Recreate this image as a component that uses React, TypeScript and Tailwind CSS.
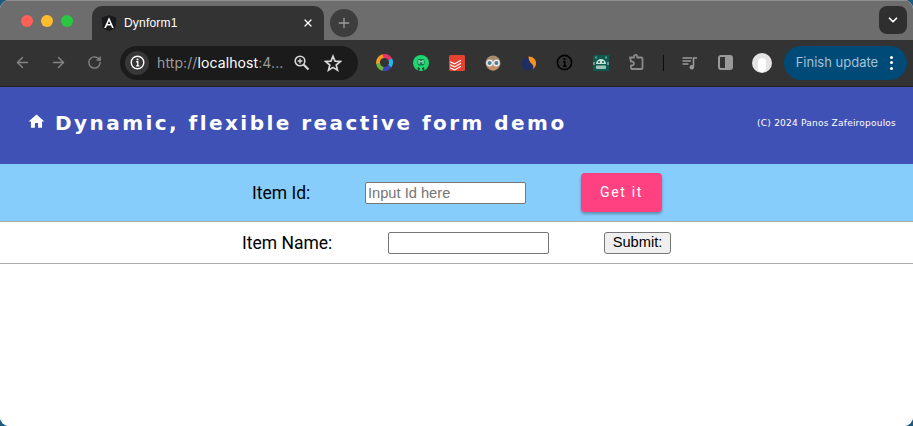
import React from "react";
import { ArrowLeft, ArrowRight, RotateCw, Plus, X, ChevronDown } from "lucide-react";

const sans = "font-['Roboto',sans-serif]";

function InfoGlyph({ size, stroke, color, sw }: { size: number; stroke: string; color: string; sw: number }) {
  return (
    <svg width={size} height={size} viewBox="0 0 16 16" fill="none">
      <circle cx="8" cy="8" r="6.7" stroke={stroke} strokeWidth={sw} />
      <circle cx="8" cy="4.9" r="1.05" fill={color} />
      <path d="M6.6 7.2H8.3V11.4M6.5 11.6H10" stroke={color} strokeWidth="1.4" />
    </svg>
  );
}

function Exts() {
  return (
    <div className="flex items-center">
      <div className="w-[35.7px] flex justify-center">
        <svg width="17" height="17" viewBox="0 0 18 18" fill="none" strokeWidth="4.2">
          <path d="M7 2.5 A7 7 0 0 1 15 5.5" stroke="#e8336d" />
          <path d="M15 5.5 A7 7 0 0 1 14.5 13" stroke="#27b5ee" />
          <path d="M14.5 13 A7 7 0 0 1 6.5 15.5" stroke="#3c45b5" />
          <path d="M7.5 15.8 A7 7 0 0 1 2.2 9.5" stroke="#6cb33f" />
          <path d="M2.2 10 A7 7 0 0 1 7.5 2.3" stroke="#f59a23" />
        </svg>
      </div>
      <div className="w-[36px] flex justify-center">
        <svg width="16" height="16" viewBox="0 0 16 16">
          <circle cx="8" cy="8" r="8" fill="#1ed66f" />
          <rect x="4.5" y="4" width="7" height="6.5" rx="2" fill="#157a49" />
          <path d="M6 9V5.3l2 2 2-2V9" fill="none" stroke="#bdf5d6" strokeWidth="1" />
          <path d="M5.5 16l-.5-3.5 2 1.2M10.5 16l.5-3.5-2 1.2" fill="#333" stroke="#333" strokeWidth="0.8" />
        </svg>
      </div>
      <div className="w-[36px] flex justify-center">
        <svg width="16" height="16" viewBox="0 0 16 16">
          <rect width="16" height="16" rx="1.5" fill="#e44332" />
          <path d="M1 6.7l4.5 2.2 6.5-3.6M1 9.7l4.5 2.2 6.5-3.6M1 12.7l4.5 2.2 6.5-3.6" fill="none" stroke="#fff" strokeWidth="1.2" />
        </svg>
      </div>
      <div className="w-[36px] flex justify-center">
        <svg width="16" height="16" viewBox="0 0 16 16">
          <circle cx="8" cy="8" r="7.5" fill="#a88a6c" />
          <circle cx="8" cy="11.5" r="4" fill="#c98c68" />
          <circle cx="4.6" cy="8" r="2.7" fill="#4d7d95" stroke="#ececec" strokeWidth="1.4" />
          <circle cx="11.4" cy="8" r="2.7" fill="#4d7d95" stroke="#ececec" strokeWidth="1.4" />
        </svg>
      </div>
      <div className="w-[36px] flex justify-center">
        <svg width="16" height="16" viewBox="0 0 16 16">
          <circle cx="7" cy="9" r="6.5" fill="#1f2f66" />
          <path d="M7.5 1.5 C12 1.2 15.5 4.5 15 9 C14.7 11.5 13.5 13 12 14 C13.5 10.5 11 9.5 9.5 7.5 C8.2 5.8 7.5 4 7.5 1.5Z" fill="#f7941d" />
        </svg>
      </div>
      <div className="w-[36px] flex justify-center">
        <InfoGlyph size={17} stroke="#000" color="#000" sw={1.5} />
      </div>
      <div className="w-[36px] flex justify-center">
        <svg width="16" height="16" viewBox="0 0 16 16">
          <rect width="16" height="16" fill="#0e5a4f" />
          <path d="M3 1.5v2M13 1.5v2M1 7v3M15 7v3" stroke="#b9d8cc" strokeWidth="1" />
          <path d="M3 9a5 5 0 0 1 10 0z" fill="#c7e2d8" />
          <rect x="3" y="9" width="10" height="1.4" fill="#0e5a4f" />
          <rect x="3" y="10.4" width="10" height="3.6" rx="1" fill="#9cc4b6" />
          <circle cx="6" cy="7" r="1" fill="#0e5a4f" />
          <circle cx="10" cy="7" r="1" fill="#0e5a4f" />
        </svg>
      </div>
      <div className="w-[36px] flex justify-center">
        <svg width="17" height="17" viewBox="0 0 17 17" fill="none" stroke="#8a8a8a" strokeWidth="1.8" strokeLinejoin="round">
          <path d="M2 3.5H6V2.5A1.6 1.6 0 0 1 9.2 2.5V3.5H13.5A1 1 0 0 1 14.5 4.5V14A1 1 0 0 1 13.5 15H4A1 1 0 0 1 3 14V11.5H4A1.9 1.9 0 0 0 4 7.7H3Z" />
        </svg>
      </div>
    </div>
  );
}

export default function App() {
  return (
    <div className={`w-[913px] h-[426px] overflow-hidden bg-[#1c5a80] ${sans}`}>
      <div className="w-full h-full overflow-hidden rounded-[9px] flex flex-col bg-white">
        {/* tab strip */}
        <div className="h-[40px] shrink-0 flex items-end bg-[#6d6d6d] border-t border-[#8f8f8f]">
          <div className="flex items-center gap-[8px] pl-[21px] w-[92px] h-full -mt-[1px]">
            <span className="w-[12px] h-[12px] rounded-full bg-[#fe5f57]" />
            <span className="w-[12px] h-[12px] rounded-full bg-[#febc2e]" />
            <span className="w-[12px] h-[12px] rounded-full bg-[#28c840]" />
          </div>
          <div className="w-[232px] h-[34px] bg-[#333333] rounded-t-[10px] flex items-center pl-[9px] pr-[10px] shrink-0">
            <svg width="16" height="17" viewBox="0 0 16 17" className="shrink-0">
              <path d="M8 0L15.5 2.7 14.3 12.8 8 16.5 1.7 12.8 .5 2.7Z" fill="#1a1a1d" />
              <path d="M8 2.2L3.2 13h1.8l1-2.4h4l1 2.4h1.8L8 2.2zM6.7 9L8 5.9 9.3 9H6.7z" fill="#fff" />
            </svg>
            <span className="ml-[7px] flex-1 text-[12px] text-white font-['Liberation_Sans',sans-serif] tracking-[0.2px]">Dynform1</span>
            <X size={12} strokeWidth={2.5} className="text-white" />
          </div>
          <div className="w-[28px] h-[28px] rounded-full bg-[#3d3d3d] flex items-center justify-center ml-[6px] mb-[3px] shrink-0">
            <Plus size={16} strokeWidth={2} className="text-[#9a9a9a]" />
          </div>
          <div className="flex-1" />
          <div className="w-[28px] h-[28px] rounded-[8px] bg-[#2f2f2f] flex items-center justify-center mr-[6px] mb-[6px]">
            <ChevronDown size={14} strokeWidth={3} className="text-white" />
          </div>
        </div>

        {/* toolbar */}
        <div className="h-[47px] shrink-0 flex items-center bg-[#333333] border-b border-[#222] pb-[1px] pl-[4px]">
          <div className="w-[36px] flex justify-center"><ArrowLeft size={17} strokeWidth={2} className="text-[#858585]" /></div>
          <div className="w-[36px] flex justify-center"><ArrowRight size={17} strokeWidth={2} className="text-[#858585]" /></div>
          <div className="w-[36px] flex justify-center"><RotateCw size={15} strokeWidth={2.2} className="text-[#858585]" /></div>
          <div className="w-[238px] h-[34px] ml-[8px] rounded-full bg-[#1b1b1b] flex items-center pl-[5px] shrink-0">
            <div className="w-[24px] h-[24px] rounded-full bg-[#373737] flex items-center justify-center">
              <InfoGlyph size={15} stroke="#fff" color="#fff" sw={1.5} />
            </div>
            <span className="ml-[8px] text-[14px] text-[#9c9c9c] w-[126px] whitespace-nowrap font-['Inter',sans-serif] tracking-[0.1px]">
              http://<span className="text-white">localhost</span>:4...
            </span>
            <svg width="17" height="17" viewBox="0 0 17 17" fill="none" stroke="#d8d8d8" strokeWidth="1.6" className="ml-[10px]">
              <circle cx="7" cy="7" r="4.8" />
              <path d="M10.5 10.5L15.5 15.5" strokeWidth="2.2" />
              <path d="M7 4.6V9.4M4.6 7H9.4" strokeWidth="1.4" />
            </svg>
            <svg width="18" height="18" viewBox="0 0 18 18" fill="none" stroke="#d8d8d8" strokeWidth="1.7" strokeLinejoin="miter" className="ml-[14px]">
              <path d="M9 2.2L11 7.1 16.3 7.5 12.2 11 13.5 16.2 9 13.4 4.5 16.2 5.8 11 1.7 7.5 7 7.1Z" />
            </svg>
          </div>
          <div className="ml-[9px]"><Exts /></div>
          <div className="w-px h-[16px] bg-[#0d0d0d] ml-[8px]" />
          <div className="ml-[18px]">
            <svg width="16" height="16" viewBox="0 0 16 16" fill="none" stroke="#9a9a9a" strokeWidth="1.4">
              <path d="M0.5 3H10M0.5 6H9M0.5 9H6.5" />
              <path d="M11.5 11.5V3H15" strokeWidth="1.6" />
              <circle cx="9.8" cy="12.2" r="2.2" fill="#9a9a9a" stroke="none" />
            </svg>
          </div>
          <div className="ml-[20px] w-[15px] h-[15px] rounded-[3px] border-2 border-[#9a9a9a] flex justify-end">
            <div className="w-[6px] h-full bg-[#9a9a9a]" />
          </div>
          <div className="ml-[19px] w-[20px] h-[20px] rounded-full bg-[#e4e4e4] flex items-center justify-center overflow-hidden">
            <div className="w-[8px] h-[14px] rounded-full bg-white mt-[4px]" />
          </div>
          <div className="ml-[12px] w-[123px] h-[34px] rounded-full bg-[#004a77] flex items-center pl-[12px] shrink-0">
            <span className="w-[94px] text-[13px] text-[#a3c1d8] whitespace-nowrap font-['Inter',sans-serif]">Finish update</span>
            <div className="flex flex-col gap-[2.5px]">
              <span className="w-[3px] h-[3px] rounded-full bg-white" />
              <span className="w-[3px] h-[3px] rounded-full bg-white" />
              <span className="w-[3px] h-[3px] rounded-full bg-white" />
            </div>
          </div>
        </div>

        {/* header */}
        <div className="h-[77px] shrink-0 bg-[#3f51b5] flex items-center pl-[27px] pr-[17px] text-white font-['DejaVu_Sans',sans-serif]">
          <svg width="19" height="19" viewBox="0 0 24 24" fill="#fff" className="-mt-[8px] shrink-0">
            <path d="M10 20v-6h4v6h5v-8h3L12 3 2 12h3v8z" />
          </svg>
          <span className="ml-[9px] -mt-[5px] text-[20px] font-bold tracking-[2.45px] whitespace-nowrap leading-none">Dynamic, flexible reactive form demo</span>
          <span className="ml-auto text-[9px] tracking-[0.22px] whitespace-nowrap -mt-[3px]">(C) 2024 Panos Zafeiropoulos</span>
        </div>

        {/* item id row */}
        <div className="h-[58px] shrink-0 bg-[#87cdfb] border-b border-[#aaaaaa] flex items-center pl-[252px]">
          <span className="w-[113px] text-[17.5px] mt-[2px] text-black">Item Id:</span>
          <input
            placeholder="Input Id here"
            className="w-[161px] h-[22px] bg-white border border-[#767676] rounded-[2px] px-[2px] text-[14.67px] text-black placeholder:text-[#757575] font-['Liberation_Sans',sans-serif] outline-none"
          />
          <button className="ml-[55px] w-[81px] h-[39px] rounded-[4px] bg-[#ff4081] text-white text-[14px] font-normal tracking-[1.7px] shadow-[0_2px_3px_rgba(0,0,0,0.3)]">
            Get it
          </button>
        </div>

        {/* item name row */}
        <div className="h-[42px] shrink-0 bg-white border-b border-[#aaaaaa] flex items-center pl-[242px]">
          <span className="w-[146px] text-[17.5px] mt-[2px] text-black">Item Name:</span>
          <input className="w-[161px] h-[22px] bg-white border border-[#767676] rounded-[2px] outline-none" />
          <button className="ml-[55px] w-[67px] h-[22px] bg-[#efefef] border border-[#767676] rounded-[3px] text-[14.67px] text-black font-['Liberation_Sans',sans-serif] leading-none">
            Submit:
          </button>
        </div>

        <div className="flex-1 bg-white" />
      </div>
    </div>
  );
}
